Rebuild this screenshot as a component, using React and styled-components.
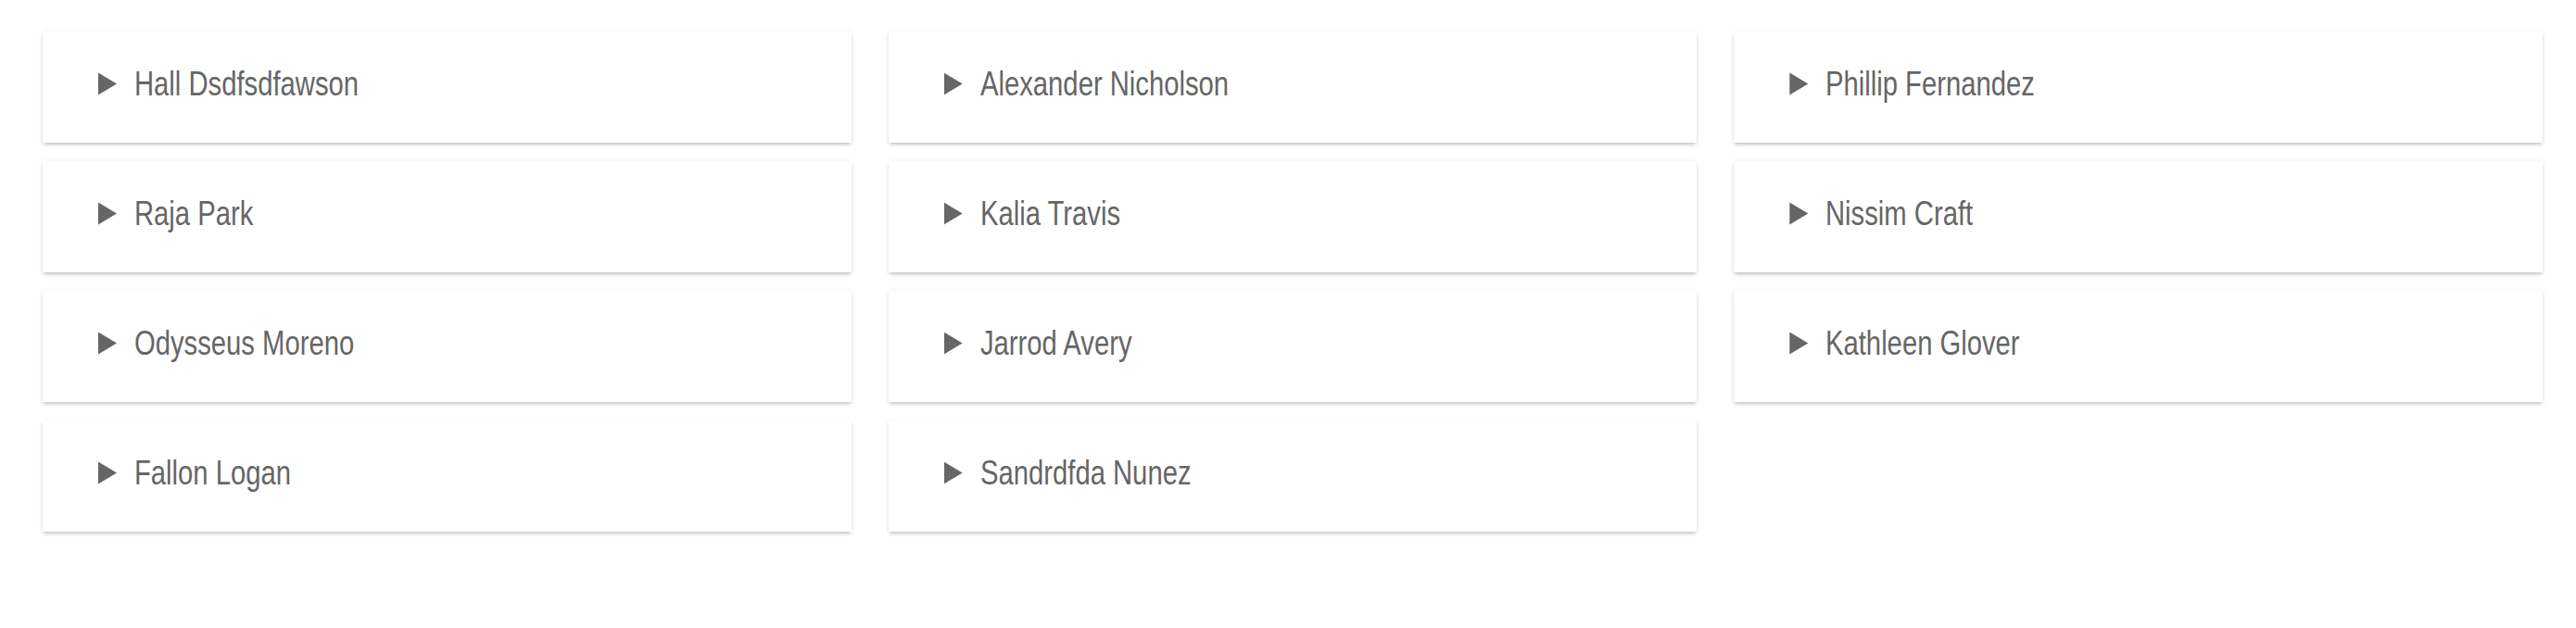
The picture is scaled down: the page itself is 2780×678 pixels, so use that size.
import React from "react";
import styled, { createGlobalStyle } from "styled-components";

const GlobalStyle = createGlobalStyle`
  html, body {
    margin: 0;
    background: #ffffff;
    font-family: "Liberation Sans", Arial, sans-serif;
  }
`;

const Grid = styled.div`
  display: grid;
  grid-template-columns: repeat(3, 1fr);
  column-gap: 40px;
  row-gap: 20px;
  padding: 34px 36px 104px 46px;
  min-height: 678px;
  box-sizing: border-box;
  align-content: start;
`;

const Card = styled.div`
  height: 120px;
  box-sizing: border-box;
  background: #ffffff;
  box-shadow: 0 3px 4px -1px rgba(0, 0, 0, 0.22), 0 0 6px rgba(0, 0, 0, 0.06);
  display: flex;
  align-items: center;
  padding: 0 0 7px 60px;
  cursor: pointer;
`;

const Marker = styled.span`
  flex: none;
  width: 20px;
  height: 24px;
  background: #666666;
  clip-path: polygon(0 0, 100% 50%, 0 100%);
  margin-right: 19px;
`;

const Name = styled.span`
  display: inline-block;
  font-size: 37px;
  line-height: 40px;
  color: #666666;
  white-space: nowrap;
  transform: scaleX(0.79);
  transform-origin: left center;
`;

const people = [
  "Hall Dsdfsdfawson",
  "Alexander Nicholson",
  "Phillip Fernandez",
  "Raja Park",
  "Kalia Travis",
  "Nissim Craft",
  "Odysseus Moreno",
  "Jarrod Avery",
  "Kathleen Glover",
  "Fallon Logan",
  "Sandrdfda Nunez",
];

const App = () => {
  return (
    <>
      <GlobalStyle />
      <Grid>
        {people.map(name => (
          <Card key={name}>
            <Marker />
            <Name>{name}</Name>
          </Card>
        ))}
      </Grid>
    </>
  );
};

export default App;
